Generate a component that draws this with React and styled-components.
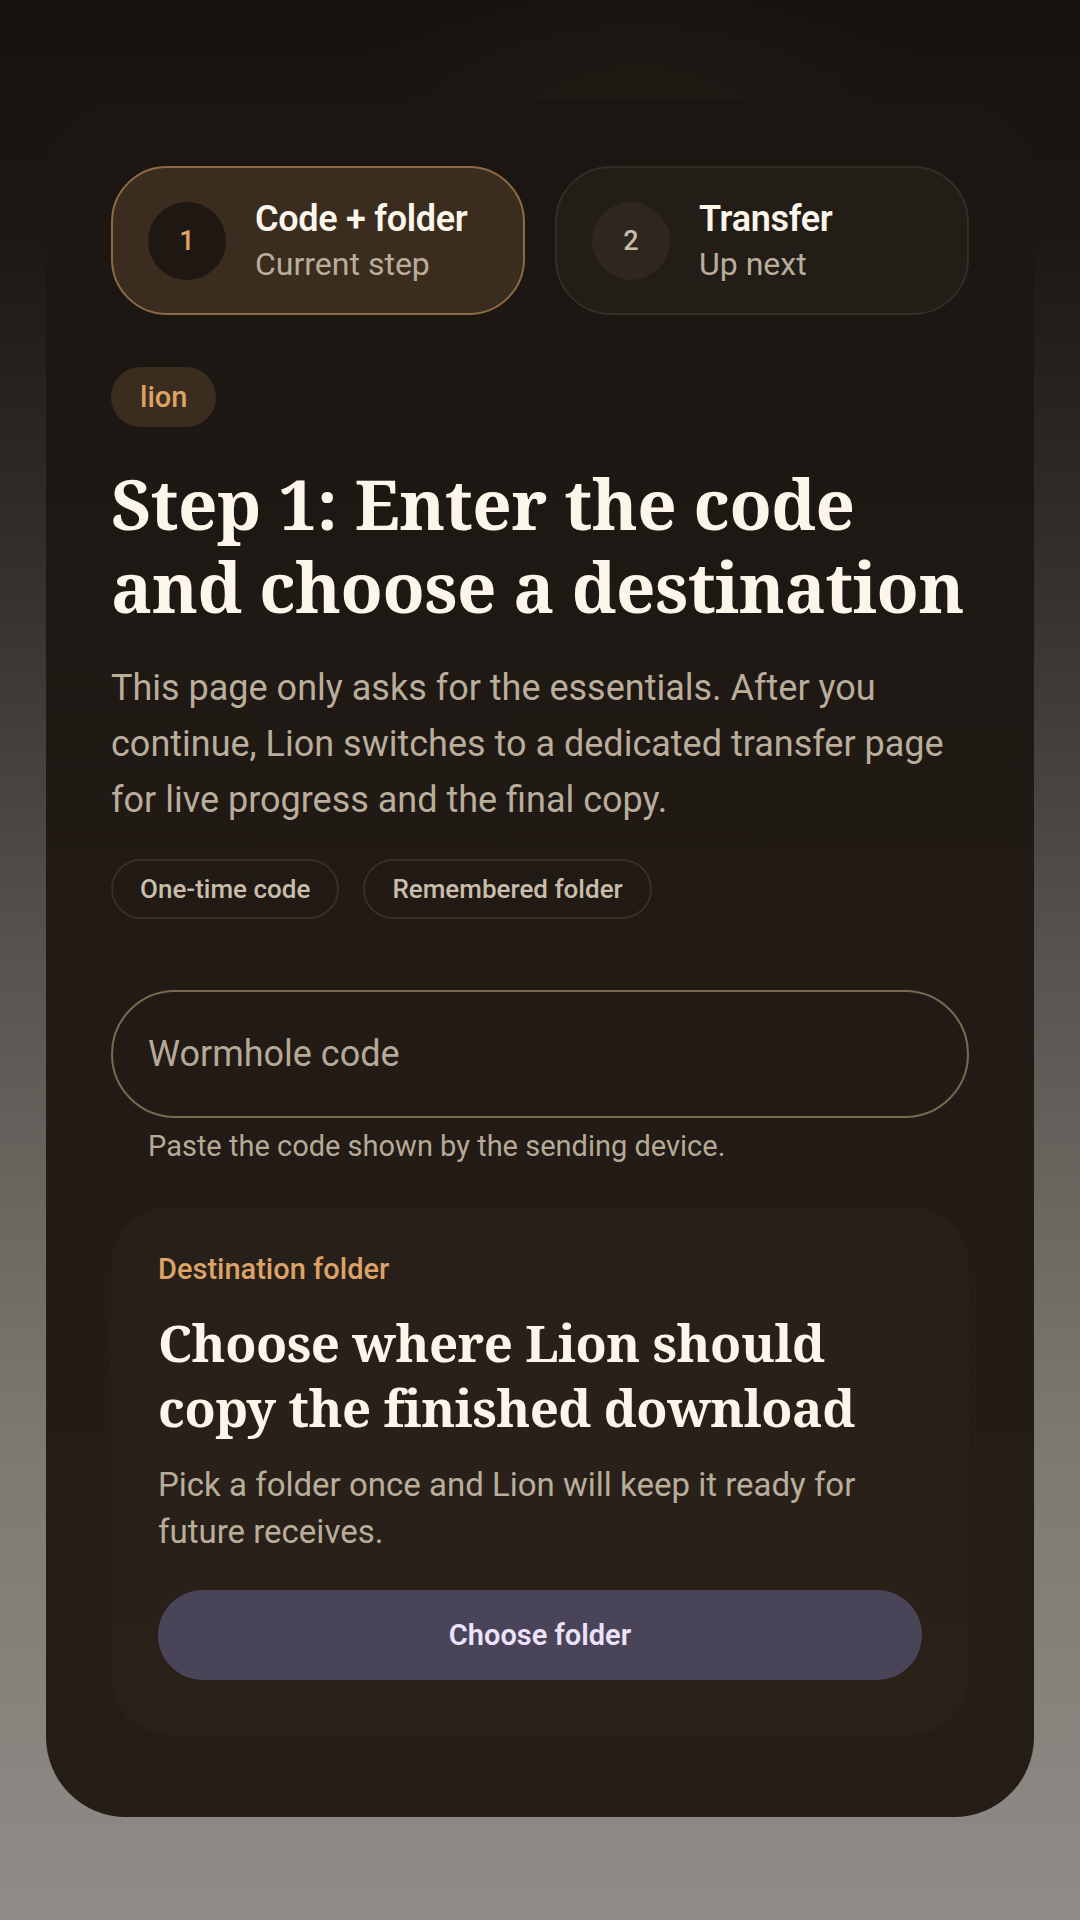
import React from 'react'
import styled, { createGlobalStyle } from 'styled-components'

const Global = createGlobalStyle`
    html, body {
        margin:0;
        padding:0;
    }
    body {
        font-family: Roboto, "Noto Sans", "Liberation Sans", sans-serif;
        background:#15120f;
    }
`

const Page = styled.div`
    min-height:1920px;
    box-sizing:border-box;
    padding:100px 46px 0;
    background:
        radial-gradient(ellipse 420px 220px at 640px 110px, rgba(60,44,28,0.25), transparent 70%),
        linear-gradient(180deg, #15120f 0%, #1b1714 12%, #35302b 30%, #58534e 50%, #7e7872 75%, #908b86 100%);
`

const Shell = styled.main`
    box-sizing:border-box;
    padding:66px 65px 82px;
    border-radius:80px;
    background:linear-gradient(180deg, #1b1612 0%, #211a15 50%, #251e18 100%);
    display:flex;
    flex-direction:column;
`

const Steps = styled.div`
    display:grid;
    grid-template-columns:1fr 1fr;
    gap:30px;
`

const StepCard = styled.div`
    box-sizing:border-box;
    height:149px;
    border-radius:56px;
    border:2px solid ${p => p.active ? '#8c6a45' : '#352c24'};
    background:${p => p.active ? '#3a2d1f' : '#231d18'};
    display:flex;
    align-items:center;
    gap:29px;
    padding:0 0 0 35px;
`

const Bubble = styled.div`
    width:78px;
    height:78px;
    flex:none;
    border-radius:50%;
    background:${p => p.active ? '#1f1812' : '#2f271f'};
    color:${p => p.active ? '#e3a567' : '#c9bdab'};
    display:flex;
    align-items:center;
    justify-content:center;
    font-size:27px;
    font-weight:500;
`

const StepText = styled.div`
    display:flex;
    flex-direction:column;
    gap:4px;
`

const StepTitle = styled.div`
    font-size:36px;
    font-weight:600;
    line-height:42px;
    color:#fbf5ea;
    letter-spacing:-0.3px;
`

const StepSub = styled.div`
    font-size:32px;
    line-height:40px;
    color:#b9ad9b;
`

const Tag = styled.span`
    align-self:flex-start;
    margin-top:52px;
    height:60px;
    padding:0 29px;
    border-radius:30px;
    background:#3a2d1f;
    color:#dca266;
    font-size:29px;
    font-weight:500;
    display:flex;
    align-items:center;
`

const Title = styled.h1`
    margin:35px 0 0;
    font-family:"Noto Serif", "DejaVu Serif", "Liberation Serif", serif;
    font-weight:700;
    font-size:${p => p.size || 69}px;
    line-height:${p => p.lh || 83}px;
    color:#fbf5ea;
    letter-spacing:-0.5px;
`

const Lead = styled.p`
    margin:32px 0 0;
    font-size:36px;
    line-height:56px;
    color:#b9ad9b;
`

const Chips = styled.div`
    display:flex;
    gap:24px;
    margin-top:31px;
`

const Chip = styled.span`
    box-sizing:border-box;
    height:60px;
    padding:0 27px;
    border-radius:30px;
    border:2px solid #372e26;
    color:#c9bdab;
    font-size:26px;
    font-weight:500;
    display:flex;
    align-items:center;
`

const Field = styled.input`
    box-sizing:border-box;
    margin-top:71px;
    width:100%;
    height:128px;
    border-radius:64px;
    border:2.5px solid #7a6951;
    background:transparent;
    padding:0 35px;
    font-family:Roboto, "Noto Sans", sans-serif;
    font-size:36px;
    color:#eee5d6;
    outline:none;
    &::placeholder {
        color:#b6aa97;
    }
`

const Hint = styled.div`
    margin:11px 0 0 37px;
    font-size:29px;
    line-height:34px;
    color:#b6aa97;
`

const Panel = styled.section`
    margin-top:44px;
    border-radius:60px;
    background:linear-gradient(180deg, #271f19 0%, #2a2219 100%);
    padding:46px 47px 55px;
    display:flex;
    flex-direction:column;
`

const Eyebrow = styled.div`
    font-size:29px;
    line-height:32px;
    font-weight:500;
    color:#dca266;
`

const PanelText = styled.p`
    margin:21px 0 0;
    font-size:33px;
    line-height:47px;
    color:#b9ad9b;
`

const Button = styled.button`
    margin-top:35px;
    height:90px;
    border:none;
    border-radius:45px;
    background:#4a4459;
    color:#ebe3fb;
    font-family:Roboto, "Noto Sans", sans-serif;
    font-size:29px;
    font-weight:600;
`

const steps = [
    { n: 1, title: 'Code + folder', sub: 'Current step', active: true },
    { n: 2, title: 'Transfer', sub: 'Up next', active: false },
]

export default function App() {
    return (
        <Page>
            <Global />
            <Shell>
                <Steps>
                    {steps.map(s => (
                        <StepCard key={s.n} active={s.active}>
                            <Bubble active={s.active}>{s.n}</Bubble>
                            <StepText>
                                <StepTitle>{s.title}</StepTitle>
                                <StepSub>{s.sub}</StepSub>
                            </StepText>
                        </StepCard>
                    ))}
                </Steps>

                <Tag>lion</Tag>
                <Title>Step 1: Enter the code and choose a destination</Title>
                <Lead>
                    This page only asks for the essentials. After you continue, Lion switches to a
                    dedicated transfer page for live progress and the final copy.
                </Lead>
                <Chips>
                    <Chip>One-time code</Chip>
                    <Chip>Remembered folder</Chip>
                </Chips>

                <Field placeholder="Wormhole code" />
                <Hint>Paste the code shown by the sending device.</Hint>

                <Panel>
                    <Eyebrow>Destination folder</Eyebrow>
                    <Title as="h2" size={51} lh={65} style={{ marginTop: 25 }}>
                        Choose where Lion should copy the finished download
                    </Title>
                    <PanelText>
                        Pick a folder once and Lion will keep it ready for future receives.
                    </PanelText>
                    <Button>Choose folder</Button>
                </Panel>
            </Shell>
        </Page>
    )
}
